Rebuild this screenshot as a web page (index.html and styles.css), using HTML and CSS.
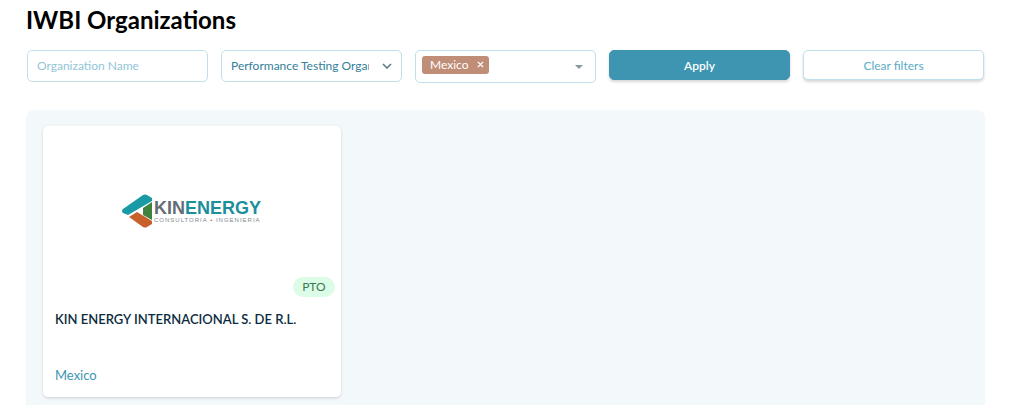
FILE: index.html
```
<!DOCTYPE html>
<html lang="en">
<head>
    <meta charset="UTF-8">
    <meta name="viewport" content="width=device-width, initial-scale=1.0">
    <title>IWBI Organizations</title>
    <link rel="stylesheet" href="styles.css">
</head>
<body>
    <main class="page">
        <h1>IWBI Organizations</h1>

        <form class="filters">
            <input class="field" type="text" aria-label="Organization name" placeholder="Organization Name">

            <div class="select-wrap">
                <select class="field" aria-label="Organization type">
                    <option>Performance Testing Organization</option>
                </select>
                <svg class="chevron" viewBox="0 0 10 6" aria-hidden="true">
                    <path d="M1 1l4 4 4-4" fill="none" stroke="#56787f" stroke-width="1.5"/>
                </svg>
            </div>

            <div class="field country">
                <span class="tag">Mexico
                    <button type="button" aria-label="Remove Mexico">
                        <svg viewBox="0 0 8 8" aria-hidden="true"><path d="M1 1l6 6M7 1l-6 6" stroke="#fff" stroke-width="1.6"/></svg>
                    </button>
                </span>
                <input type="text" aria-label="Country">
                <svg class="caret" viewBox="0 0 8 4" aria-hidden="true"><path d="M0 0h8L4 4z" fill="#8a999e"/></svg>
            </div>

            <button class="btn btn-apply" type="submit">Apply</button>
            <button class="btn btn-clear" type="reset">Clear filters</button>
        </form>

        <section class="results">
            <article class="card">
                <div class="card-image">
                    <svg class="logo" viewBox="0 0 142 34" role="img" aria-label="Kinenergy">
                        <path d="M2 15L22 1Q24 0 26 1L31 4V7L7 21L2 19Q0 17 2 15Z" fill="#1a9aa5"/>
                        <path d="M22 14L31 8V26L22 21Z" fill="#3f833f"/>
                        <path d="M8 23L16 18L31 27V30L26 33Q24 34 22 33Z" fill="#c8602b"/>
                        <text class="logo-name" x="33" y="20"><tspan fill="#626d75">KIN</tspan><tspan fill="#1c8f9b">ENERGY</tspan></text>
                        <text class="logo-sub" x="33" y="28">CONSULTORIA <tspan fill="#c8602b">•</tspan> INGENIERIA</text>
                    </svg>
                </div>
                <span class="badge">PTO</span>
                <h2>KIN ENERGY INTERNACIONAL S. DE R.L.</h2>
                <p class="location">Mexico</p>
            </article>
        </section>
    </main>
</body>
</html>
```
FILE: styles.css
```
* {
    box-sizing: border-box;
}
body {
    margin: 0;
    background: #fff;
    color: #000;
    font-family: Lato, "Open Sans", sans-serif;
    font-size: 12px;
}
.page {
    padding: 4px 24px 0 26px;
}
h1 {
    margin: 0 0 14px;
    font-size: 24px;
    line-height: 32px;
    font-weight: 700;
}
.filters {
    display: grid;
    grid-template-columns: repeat(5, minmax(0, 1fr));
    gap: 13px;
    align-items: start;
    padding: 0 1px;
}
.field {
    width: 100%;
    height: 32px;
    padding: 0 9px 1px;
    border: 1px solid #bfe0ea;
    border-radius: 5px;
    background: #fff;
    color: #32809a;
    font: inherit;
}
.field::placeholder {
    color: #93c5d7;
    opacity: 1;
}
.select-wrap {
    position: relative;
}
.select-wrap select {
    appearance: none;
    padding: 0 32px 1px 9px;
}
.chevron {
    position: absolute;
    top: 13px;
    right: 10px;
    width: 10px;
    height: 6px;
    pointer-events: none;
}
.country {
    display: flex;
    align-items: center;
    height: 33px;
    padding: 0 12px 0 6px;
}
.country input {
    flex: 1;
    min-width: 0;
    border: 0;
    outline: 0;
    background: none;
    font: inherit;
}
.tag {
    display: flex;
    align-items: center;
    gap: 8px;
    height: 18px;
    margin-bottom: 4px;
    padding: 0 5px 0 8px;
    border-radius: 3px;
    background: #c08d76;
    color: #fff;
}
.tag button {
    display: flex;
    padding: 0;
    border: 0;
    background: none;
    cursor: pointer;
}
.tag svg {
    width: 7px;
    height: 7px;
}
.caret {
    width: 8px;
    height: 4px;
}
.btn {
    height: 30px;
    border-radius: 5px;
    font: inherit;
    box-shadow: 0 2px 3px rgba(0, 0, 0, 0.16);
    cursor: pointer;
}
.btn-apply {
    border: 1px solid #3d95b2;
    background: #3d95b2;
    color: #fff;
    font-weight: 600;
}
.btn-clear {
    border: 1px solid #bfe0ea;
    background: #fff;
    color: #5cacc6;
}
.results {
    display: grid;
    grid-template-columns: repeat(3, minmax(0, 1fr));
    gap: 16px;
    margin-top: 27px;
    padding: 16px 17px 8px;
    border-radius: 8px 8px 0 0;
    background: #f3f8fb;
}
.card {
    display: flex;
    flex-direction: column;
    padding: 0 6px 12px 12px;
    border-radius: 5px;
    background: #fff;
    box-shadow: 0 1px 3px rgba(0, 0, 0, 0.16);
}
.card-image {
    display: flex;
    align-items: center;
    justify-content: center;
    height: 151px;
    padding: 18px 6px 0 0;
}
.logo {
    width: 142px;
    height: 34px;
}
.logo-name {
    font-family: "Liberation Sans", sans-serif;
    font-size: 18px;
    font-weight: 700;
}
.logo-sub {
    fill: #7f898f;
    font-family: "Liberation Sans", sans-serif;
    font-size: 6px;
    letter-spacing: 1px;
}
.badge {
    align-self: flex-end;
    padding: 0 9px;
    border-radius: 10px;
    background: #dcfce7;
    color: #3d7652;
    line-height: 20px;
}
.card h2 {
    margin: 12px 0 0;
    color: #0b2c40;
    font-size: 13px;
    line-height: 20px;
    font-weight: 600;
}
.location {
    margin: 36px 0 0;
    color: #3d95b2;
    font-size: 13px;
    line-height: 20px;
}
```
